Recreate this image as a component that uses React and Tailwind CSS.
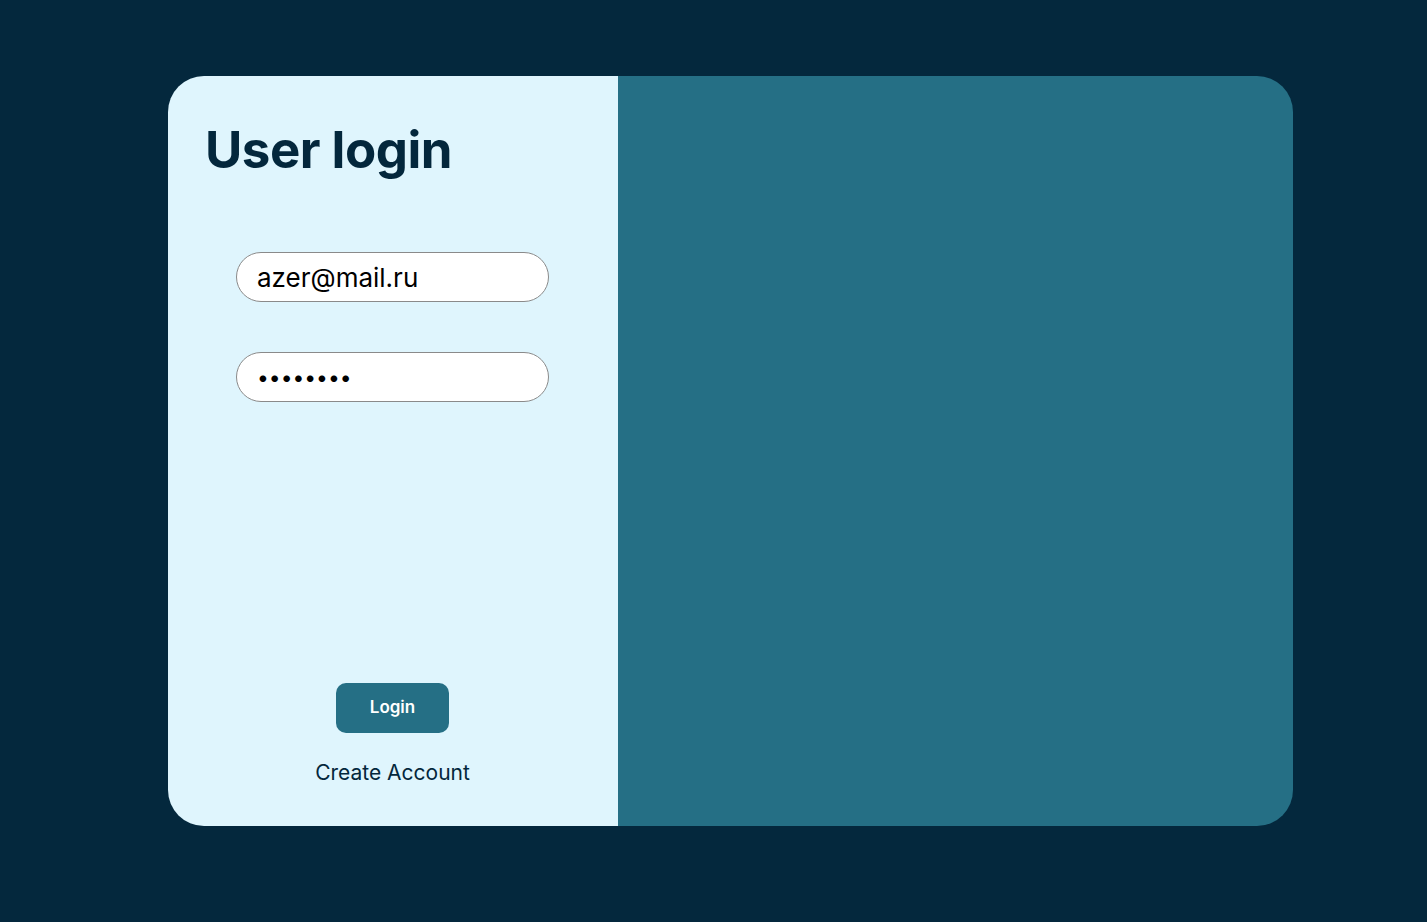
export default function App() {
  return (
    <div className="min-h-screen w-full bg-[#04283d] pt-[76px] pl-[168px]" style={{ fontFamily: '"Inter", "Noto Sans", sans-serif' }}>
      <div className="flex w-[1125px] h-[750px] rounded-[36px] overflow-hidden">

        {/* Left: login form */}
        <div className="w-[450px] h-full bg-[#dff5fd] flex flex-col pr-[1px]">
          <h1 className="pl-[37px] pt-[42px] text-[51px] leading-[64px] font-bold tracking-[-0.5px] text-[#03273c]">
            User login
          </h1>

          <div className="flex flex-col items-center mt-[70px] gap-[50px]">
            <input
              type="email"
              defaultValue="azer@mail.ru"
              className="w-[313px] h-[50px] rounded-full bg-white border border-[#8a8a8a] px-[20px] text-[26px] text-black outline-none"
            />
            <input
              type="password"
              defaultValue="azerty12"
              className="w-[313px] h-[50px] rounded-full bg-white border border-[#8a8a8a] px-[20px] text-[21px] text-black outline-none"
            />
          </div>

          <div className="flex flex-col items-center mt-auto mb-[39px]">
            <button className="w-[113px] h-[50px] rounded-[10px] bg-[#256f85] text-white text-[17px] font-semibold">
              Login
            </button>
            <a className="mt-[26px] text-[21px] text-[#03273c] leading-[28px]">Create Account</a>
          </div>
        </div>

        {/* Right: decorative panel */}
        <div className="flex-1 h-full bg-[#256f85]" />
      </div>
    </div>
  )
}
